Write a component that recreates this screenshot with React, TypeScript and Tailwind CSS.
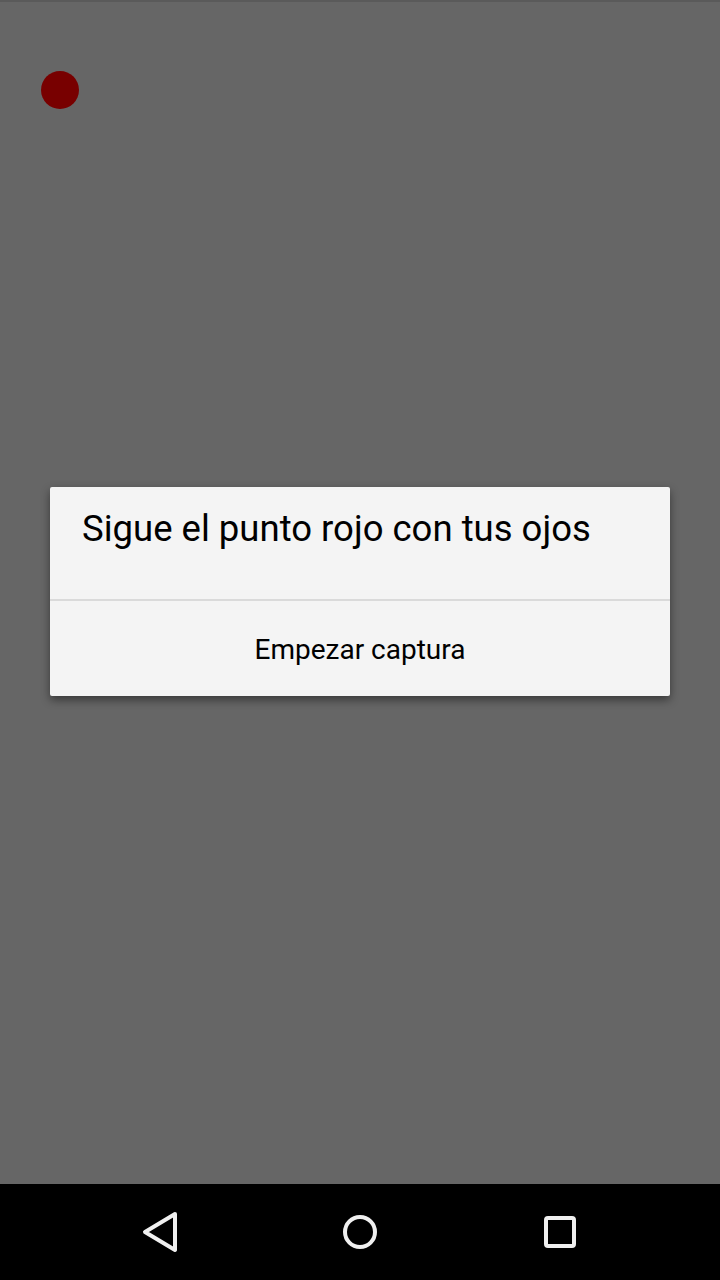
export default function App() {
  return (
    <div className="w-[720px] h-[1280px] flex flex-col bg-[#666666]" style={{ fontFamily: "Roboto, 'Noto Sans', sans-serif" }}>
      <div className="relative flex-1 flex items-center justify-center shadow-[inset_0_2px_0_#5a5a5a]">
        <div className="absolute left-[41px] top-[71px] w-[38px] h-[38px] rounded-full bg-[#780000]" />
        <div className="w-[620px] mt-[-2px] bg-[#f4f4f4] rounded-[2px] shadow-[0_4px_10px_rgba(0,0,0,0.45)] flex flex-col">
          <div className="h-[112px] pl-[32px] pt-[12px] text-[36.5px] leading-[60px] text-black">
            Sigue el punto rojo con tus ojos
          </div>
          <div className="h-[2px] bg-[#dadada]" />
          <div className="h-[95px] pt-[4px] flex items-center justify-center text-[28px] text-black">
            Empezar captura
          </div>
        </div>
      </div>
      <div className="h-[96px] bg-black grid grid-cols-3 items-center px-[60px]">
        <div className="flex justify-center">
          <svg width="40" height="44" viewBox="0 0 40 44">
            <path d="M35 4 L5 22 L35 40 Z" fill="none" stroke="#f0f0f0" strokeWidth="4" strokeLinejoin="round" />
          </svg>
        </div>
        <div className="flex justify-center">
          <svg width="40" height="40" viewBox="0 0 40 40">
            <circle cx="20" cy="20" r="15" fill="none" stroke="#f0f0f0" strokeWidth="4" />
          </svg>
        </div>
        <div className="flex justify-center">
          <svg width="40" height="40" viewBox="0 0 40 40">
            <rect x="6" y="6" width="28" height="28" rx="2" fill="none" stroke="#f0f0f0" strokeWidth="4" />
          </svg>
        </div>
      </div>
    </div>
  );
}
